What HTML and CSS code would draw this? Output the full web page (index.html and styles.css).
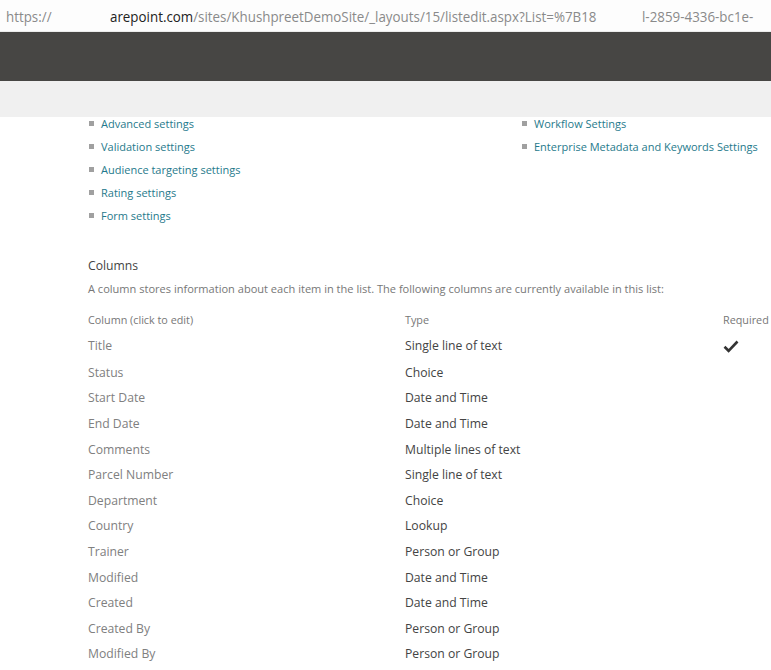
FILE: index.html
```html
<!DOCTYPE html>
<html lang="en">
<head>
    <meta charset="UTF-8">
    <title>Settings - List</title>
    <link rel="stylesheet" href="styles.css">
</head>
<body>
    <div class="urlbar">
        <span class="scheme">https://</span>
        <span class="url"><b>arepoint.com</b>/sites/KhushpreetDemoSite/_layouts/15/listedit.aspx?List=%7B18</span>
        <span class="url-tail">l-2859-4336-bc1e-</span>
    </div>
    <div class="suitebar"></div>
    <div class="ribbon"></div>

    <div class="content">
        <div class="settings">
            <ul class="links">
                <li><a href="#">Advanced settings</a></li>
                <li><a href="#">Validation settings</a></li>
                <li><a href="#">Audience targeting settings</a></li>
                <li><a href="#">Rating settings</a></li>
                <li><a href="#">Form settings</a></li>
            </ul>
            <ul class="links">
                <li><a href="#">Workflow Settings</a></li>
                <li><a href="#">Enterprise Metadata and Keywords Settings</a></li>
            </ul>
        </div>

        <h3 class="section-title">Columns</h3>
        <p class="section-desc">A column stores information about each item in the list. The following columns are currently available in this list:</p>

        <div class="columns-table">
            <div class="row head">
                <span>Column (click to edit)</span>
                <span>Type</span>
                <span>Required</span>
            </div>
            <div class="row first">
                <span class="name">Title</span>
                <span class="type">Single line of text</span>
                <span class="req">
                    <svg width="16" height="13" viewBox="0 0 16 13">
                        <path d="M1.5 6.8 L5.6 10.8 L14.5 1.5" fill="none" stroke="#333" stroke-width="2.6" stroke-linejoin="miter"/>
                    </svg>
                </span>
            </div>
            <div class="row"><span class="name">Status</span><span class="type">Choice</span><span></span></div>
            <div class="row"><span class="name">Start Date</span><span class="type">Date and Time</span><span></span></div>
            <div class="row"><span class="name">End Date</span><span class="type">Date and Time</span><span></span></div>
            <div class="row"><span class="name">Comments</span><span class="type">Multiple lines of text</span><span></span></div>
            <div class="row"><span class="name">Parcel Number</span><span class="type">Single line of text</span><span></span></div>
            <div class="row"><span class="name">Department</span><span class="type">Choice</span><span></span></div>
            <div class="row"><span class="name">Country</span><span class="type">Lookup</span><span></span></div>
            <div class="row"><span class="name">Trainer</span><span class="type">Person or Group</span><span></span></div>
            <div class="row"><span class="name">Modified</span><span class="type">Date and Time</span><span></span></div>
            <div class="row"><span class="name">Created</span><span class="type">Date and Time</span><span></span></div>
            <div class="row"><span class="name">Created By</span><span class="type">Person or Group</span><span></span></div>
            <div class="row"><span class="name">Modified By</span><span class="type">Person or Group</span><span></span></div>
        </div>
    </div>
</body>
</html>
```

FILE: styles.css
```css
* {
    box-sizing: border-box;
    margin: 0;
    padding: 0;
}

html, body {
    height: 100%;
    overflow: hidden;
    background-color: #ffffff;
    font-family: "Open Sans", "Noto Sans", sans-serif;
}

/* browser address bar - the captured font is a narrow one */
.urlbar {
    height: 32px;
    display: flex;
    align-items: center;
    padding-left: 6px;
    background-color: #fdfdfd;
    border-bottom: 1px solid #ececec;
    font-size: 15px;
    color: #8a8a8a;
    white-space: nowrap;
}

.urlbar span {
    display: inline-block;
    transform: scaleX(0.89);
    transform-origin: left center;
}

.urlbar .scheme {
    width: 104px;
}

.urlbar .url {
    width: 532px;
}

.urlbar .url b {
    font-weight: normal;
    color: #222;
}

.suitebar {
    height: 49px;
    background-color: #474644;
}

.ribbon {
    height: 36px;
    background-color: #f0f0f0;
}

.content {
    padding-left: 88px;
}

.settings {
    display: grid;
    grid-template-columns: 433px auto;
    margin-top: -5px;
}

.links {
    list-style: none;
}

.links li {
    position: relative;
    padding-left: 13px;
    line-height: 23px;
    font-size: 11px;
    white-space: nowrap;
}

.links li::before {
    content: "";
    position: absolute;
    left: 1px;
    top: 9px;
    width: 5px;
    height: 5px;
    background-color: #a0a0a0;
}

a {
    color: #1f7a8c;
    text-decoration: none;
}

a:hover {
    text-decoration: underline;
}

.section-title {
    margin-top: 29px;
    font-weight: normal;
    font-size: 12.2px;
    line-height: 20px;
    color: #444;
}

.section-desc {
    margin-top: 3px;
    font-size: 11.05px;
    line-height: 20px;
    color: #777;
}

.columns-table {
    margin-top: 8px;
}

.row {
    display: grid;
    grid-template-columns: 317px 318px auto;
    height: 25.6px;
    align-items: center;
    font-size: 12.2px;
}

.row.head {
    height: 25px;
    font-size: 10.8px;
    color: #777;
}

.row.first {
    height: 27.5px;
}

.row .name {
    color: #808080;
}

.row .type {
    color: #444;
}

.row .req {
    display: flex;
    padding-top: 1px;
}
```
